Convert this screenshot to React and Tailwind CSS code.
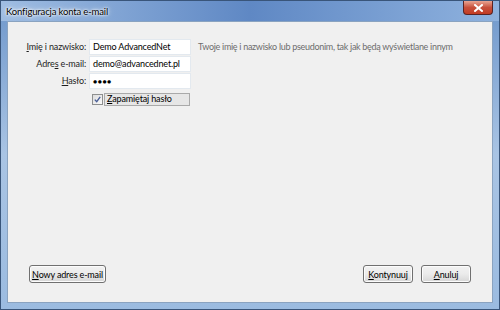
import React from 'react';

const font = "font-['Lato','Segoe_UI',sans-serif] text-[9px] tracking-[-0.15px] whitespace-nowrap";

const Key = ({ children }) => <span className="underline underline-offset-[1px]">{children}</span>;

const Field = ({ label, value, type = 'text' }) => (
    <div className="flex items-center h-[16px]">
        <div className="w-[81px] text-right pr-[3px] text-[#1e1e1e]">{label}</div>
        <div className="w-[102px] h-[16px] bg-white border border-[#e3e9ef] flex items-center px-[3px] text-black">
            {type === 'password' ? <span className="tracking-[0.5px] text-[7px]">●●●●</span> : value}
        </div>
    </div>
);

const Button = ({ children, className = '' }) => (
    <button className={`h-[18px] rounded-[3px] border border-[#707070] bg-gradient-to-b from-[#f2f2f2] via-[#ebebeb] to-[#d6d6d6] text-black leading-none shadow-[inset_0_0_0_1px_#fcfcfc] ${className}`}>
        {children}
    </button>
);

export default function App() {
    return (
        <div className={`w-[500px] h-[310px] flex flex-col bg-gradient-to-b from-[#6f97cb] via-[#a9c4e4] to-[#9bbbe0] border border-[#39557a] ${font}`}>
            {/* Title bar */}
            <div className="h-[20px] flex items-start justify-between bg-gradient-to-r from-[#9fbde2] via-[#5f88c4] to-[#8fb2de]">
                <div className="pl-[5px] pt-[4px] text-[9.5px] text-black [text-shadow:0_0_6px_#fff,0_0_3px_#fff,0_0_2px_#fff]">Konfiguracja konta e-mail</div>
                <div className="mr-[6px] w-[30px] h-[14px] rounded-b-[4px] border border-t-0 border-[#5a2323] bg-gradient-to-b from-[#e8a493] via-[#c74f3b] to-[#c23b22] flex items-center justify-center">
                    <svg width="9" height="8" viewBox="0 0 9 8">
                        <path d="M1 1 L8 7 M8 1 L1 7" stroke="#fff" strokeWidth="2" strokeLinecap="square" />
                    </svg>
                </div>
            </div>

            {/* Client area */}
            <div className="flex-1 mx-[6px] mb-[6px] bg-[#f0f0f0] border border-[#8aa3c0] flex flex-col">
                <div className="pt-[17px] flex flex-col gap-[1px]">
                    <div className="flex items-center">
                        <Field label={<><Key>I</Key>mię i nazwisko:</>} value="Demo AdvancedNet" />
                        <div className="pl-[7px] tracking-[-0.3px] text-[#6d6d6d]">Twoje imię i nazwisko lub pseudonim, tak jak będą wyświetlane innym</div>
                    </div>
                    <Field label={<>Adre<Key>s</Key> e-mail:</>} value="demo@advancednet.pl" />
                    <Field label={<><Key>H</Key>asło:</>} type="password" />
                    <div className="flex items-center h-[14px] mt-[2px] pl-[84px]">
                        <div className="w-[11px] h-[11px] border border-[#8e8f8f] bg-gradient-to-br from-[#dcdcdc] to-[#fafafa] flex items-center justify-center">
                            <svg width="7" height="7" viewBox="0 0 7 7">
                                <path d="M0.8 3.6 L2.7 5.7 L6.2 0.8" stroke="#4a5f97" strokeWidth="1.4" fill="none" />
                            </svg>
                        </div>
                        <div className="ml-[1px] w-[86px] h-[13px] border border-[#a9a9a9] bg-[#e6e6e6] flex items-center pl-[2px] text-black">
                            <Key>Z</Key>apamiętaj hasło
                        </div>
                    </div>
                </div>

                <div className="mt-auto mb-[19px] flex items-center px-[21px]">
                    <Button className="w-[77px]"><Key>N</Key>owy adres e-mail</Button>
                    <Button className="ml-auto w-[50px]"><Key>K</Key>ontynuuj</Button>
                    <Button className="ml-[8px] w-[50px]"><Key>A</Key>nuluj</Button>
                </div>
            </div>
        </div>
    );
}
